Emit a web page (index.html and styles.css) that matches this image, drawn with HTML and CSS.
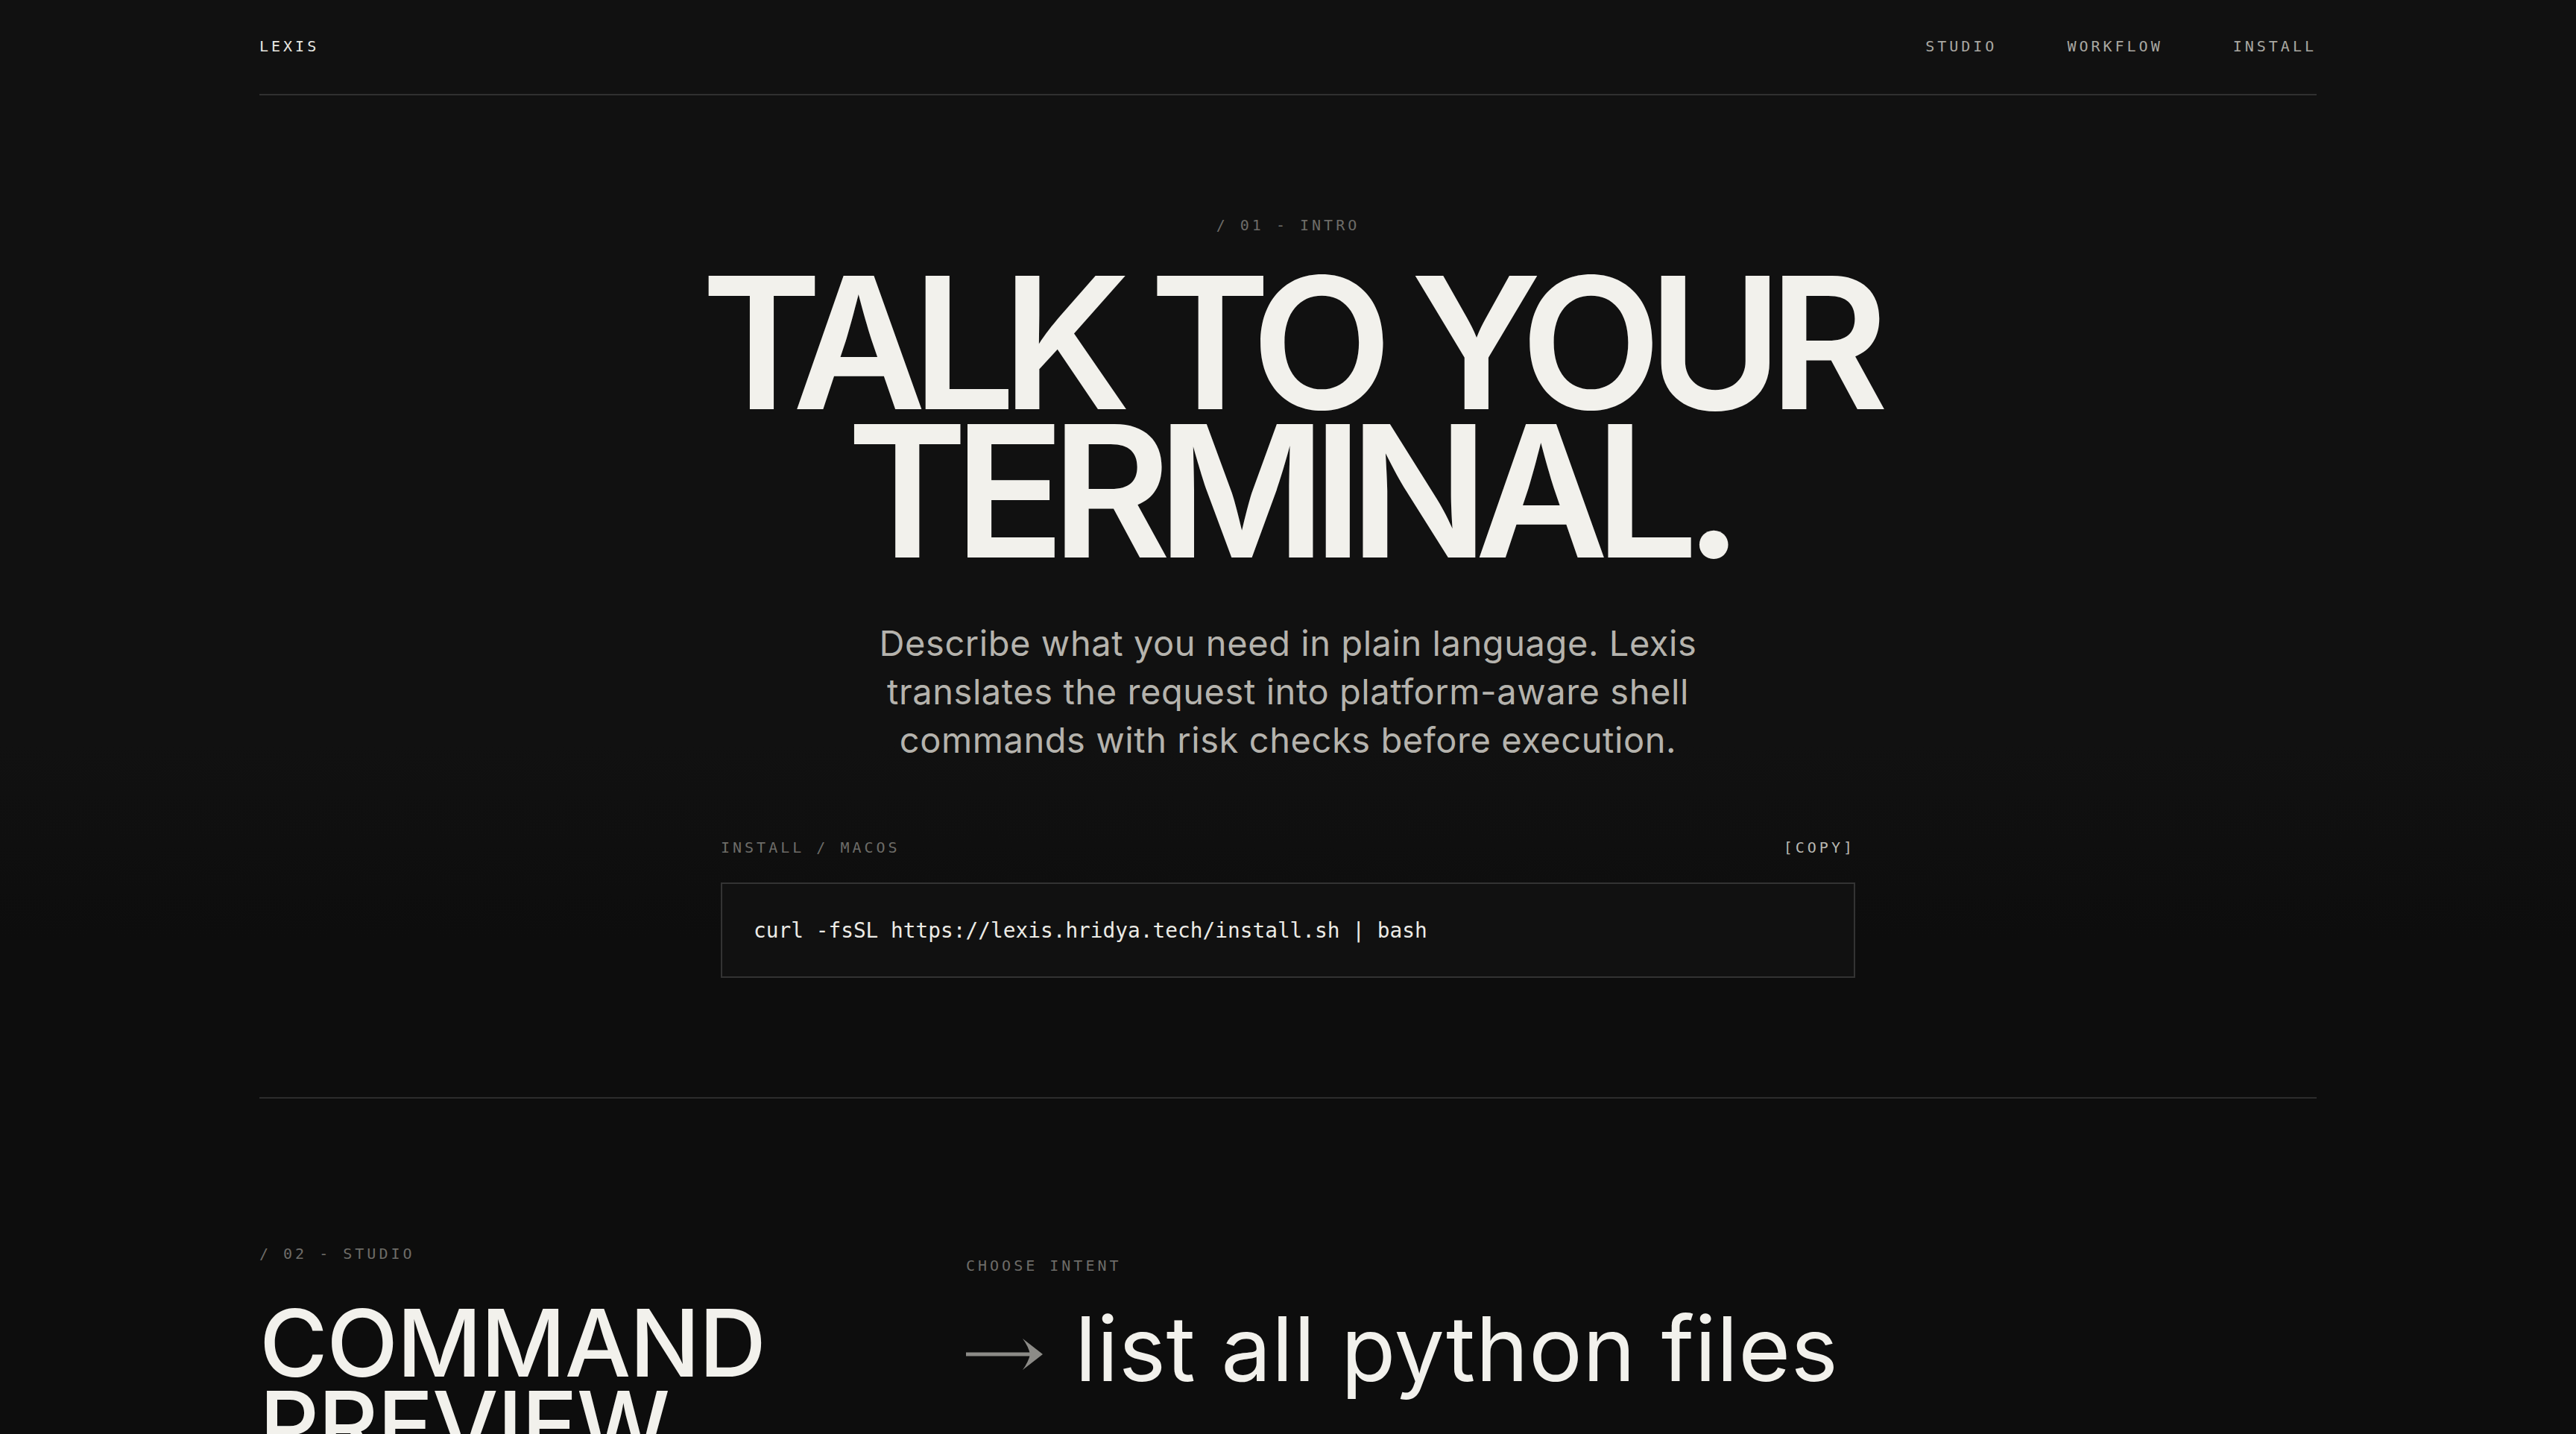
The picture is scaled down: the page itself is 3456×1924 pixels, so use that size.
FILE: index.html
```html
<!DOCTYPE html>
<html lang="en">
<head>
<meta charset="utf-8">
<title>Lexis — Talk to your terminal</title>
<link rel="stylesheet" href="styles.css">
</head>
<body>
<div class="page">
  <header class="topbar">
    <a class="brand" href="#">LEXIS</a>
    <nav class="nav">
      <a href="#studio">STUDIO</a>
      <a href="#workflow">WORKFLOW</a>
      <a href="#install">INSTALL</a>
    </nav>
  </header>

  <section class="hero" id="install">
    <p class="eyebrow">/ 01 - INTRO</p>
    <h1 class="hero-title">TALK TO YOUR<br>TERMINAL.</h1>
    <p class="hero-lead">Describe what you need in plain language. Lexis translates the request into platform-aware shell commands with risk checks before execution.</p>
    <div class="install">
      <div class="install-head">
        <span class="install-label">INSTALL / MACOS</span>
        <button class="copy" type="button">[COPY]</button>
      </div>
      <div class="install-box"><code>curl -fsSL https://lexis.hridya.tech/install.sh | bash</code></div>
    </div>
  </section>

  <section class="studio" id="studio">
    <div class="studio-left">
      <p class="eyebrow eyebrow-left">/ 02 - STUDIO</p>
      <h2 class="studio-title">COMMAND<br>PREVIEW</h2>
    </div>
    <div class="studio-right">
      <p class="eyebrow eyebrow-left">CHOOSE INTENT</p>
      <div class="intent">
        <svg class="intent-arrow" viewBox="0 0 104 44" aria-hidden="true">
          <rect x="0" y="19.5" width="92" height="5" fill="currentColor"/>
          <path d="M76 1 L103 22 L76 43 Q84 32 86 22 Q84 12 76 1 Z" fill="currentColor"/>
        </svg>
        <span class="intent-text">list all python files</span>
      </div>
    </div>
  </section>
</div>
</body>
</html>
```

FILE: styles.css
```css
* {
  box-sizing: border-box;
}

html, body {
  margin: 0;
  padding: 0;
}

body {
  background: linear-gradient(to bottom, #111111 0, #111111 1000px, #0d0d0d 1260px, #0d0d0d 100%);
  background-color: #0d0d0d;
  color: #f2f1ec;
  font-family: "Inter", "Noto Sans", sans-serif;
  min-height: 100vh;
}

.page {
  width: 2760px;
  margin: 0 auto;
}

/* ---------- top bar ---------- */
.topbar {
  height: 128px;
  display: flex;
  align-items: center;
  justify-content: space-between;
  border-bottom: 2px solid #303030;
  padding-bottom: 2px;
}

.brand,
.nav a {
  font-family: "DejaVu Sans Mono", "Liberation Mono", monospace;
  font-size: 20px;
  line-height: 24px;
  letter-spacing: 4px;
  text-decoration: none;
}

.brand {
  color: #e9e8e3;
}

.nav {
  display: flex;
  gap: 94px;
}

.nav a {
  color: #a9a8a2;
}

/* ---------- shared ---------- */
.eyebrow {
  margin: 0;
  font-family: "DejaVu Sans Mono", "Liberation Mono", monospace;
  font-size: 20px;
  line-height: 24px;
  letter-spacing: 4px;
  color: #6d6c68;
}

/* ---------- hero ---------- */
.hero {
  display: flex;
  flex-direction: column;
  align-items: center;
  text-align: center;
  padding: 162px 0 160px;
  border-bottom: 2px solid #2c2c2c;
}

.hero-title {
  margin: 46px 0 0;
  font-size: 246px;
  line-height: 199px;
  font-weight: 600;
  letter-spacing: -0.075em;
  color: #f2f1ec;
}

.hero-lead {
  margin: 72px 0 0;
  width: 1150px;
  font-size: 47px;
  line-height: 65px;
  font-weight: 400;
  letter-spacing: 0.012em;
  color: #b5b3ad;
}

.install {
  margin-top: 100px;
  width: 1522px;
  text-align: left;
}

.install-head {
  display: flex;
  justify-content: space-between;
  align-items: center;
  height: 24px;
}

.install-label {
  font-family: "DejaVu Sans Mono", "Liberation Mono", monospace;
  font-size: 20px;
  line-height: 24px;
  letter-spacing: 4px;
  color: #6d6c68;
}

.copy {
  background: none;
  border: 0;
  padding: 0;
  font-family: "DejaVu Sans Mono", "Liberation Mono", monospace;
  font-size: 20px;
  line-height: 24px;
  letter-spacing: 4px;
  color: #b9b8b2;
  cursor: pointer;
}

.install-box {
  margin-top: 35px;
  height: 128px;
  border: 2px solid #333333;
  background: #111111;
  display: flex;
  align-items: center;
  padding: 0 42px;
}

.install-box code {
  font-family: "DejaVu Sans Mono", "Liberation Mono", monospace;
  font-size: 27.8px;
  line-height: 34px;
  padding-top: 2px;
  color: #ecebe6;
}

/* ---------- studio ---------- */
.studio {
  display: grid;
  grid-template-columns: 852px 1fr;
  column-gap: 96px;
  padding-top: 196px;
}

.studio-right {
  padding-top: 16px;
}

.studio-title {
  margin: 53px 0 0;
  font-size: 125px;
  line-height: 110px;
  font-weight: 500;
  letter-spacing: -0.012em;
  color: #f2f1ec;
}

.intent {
  margin-top: 35px;
  display: flex;
  align-items: center;
  gap: 42px;
  height: 130px;
}

.intent-arrow {
  width: 104px;
  height: 44px;
  color: #8c8b87;
  flex: none;
  margin-top: 14px;
}

.intent-text {
  font-size: 120px;
  line-height: 130px;
  font-weight: 400;
  letter-spacing: 0.003em;
  color: #f2f1ec;
}
```
